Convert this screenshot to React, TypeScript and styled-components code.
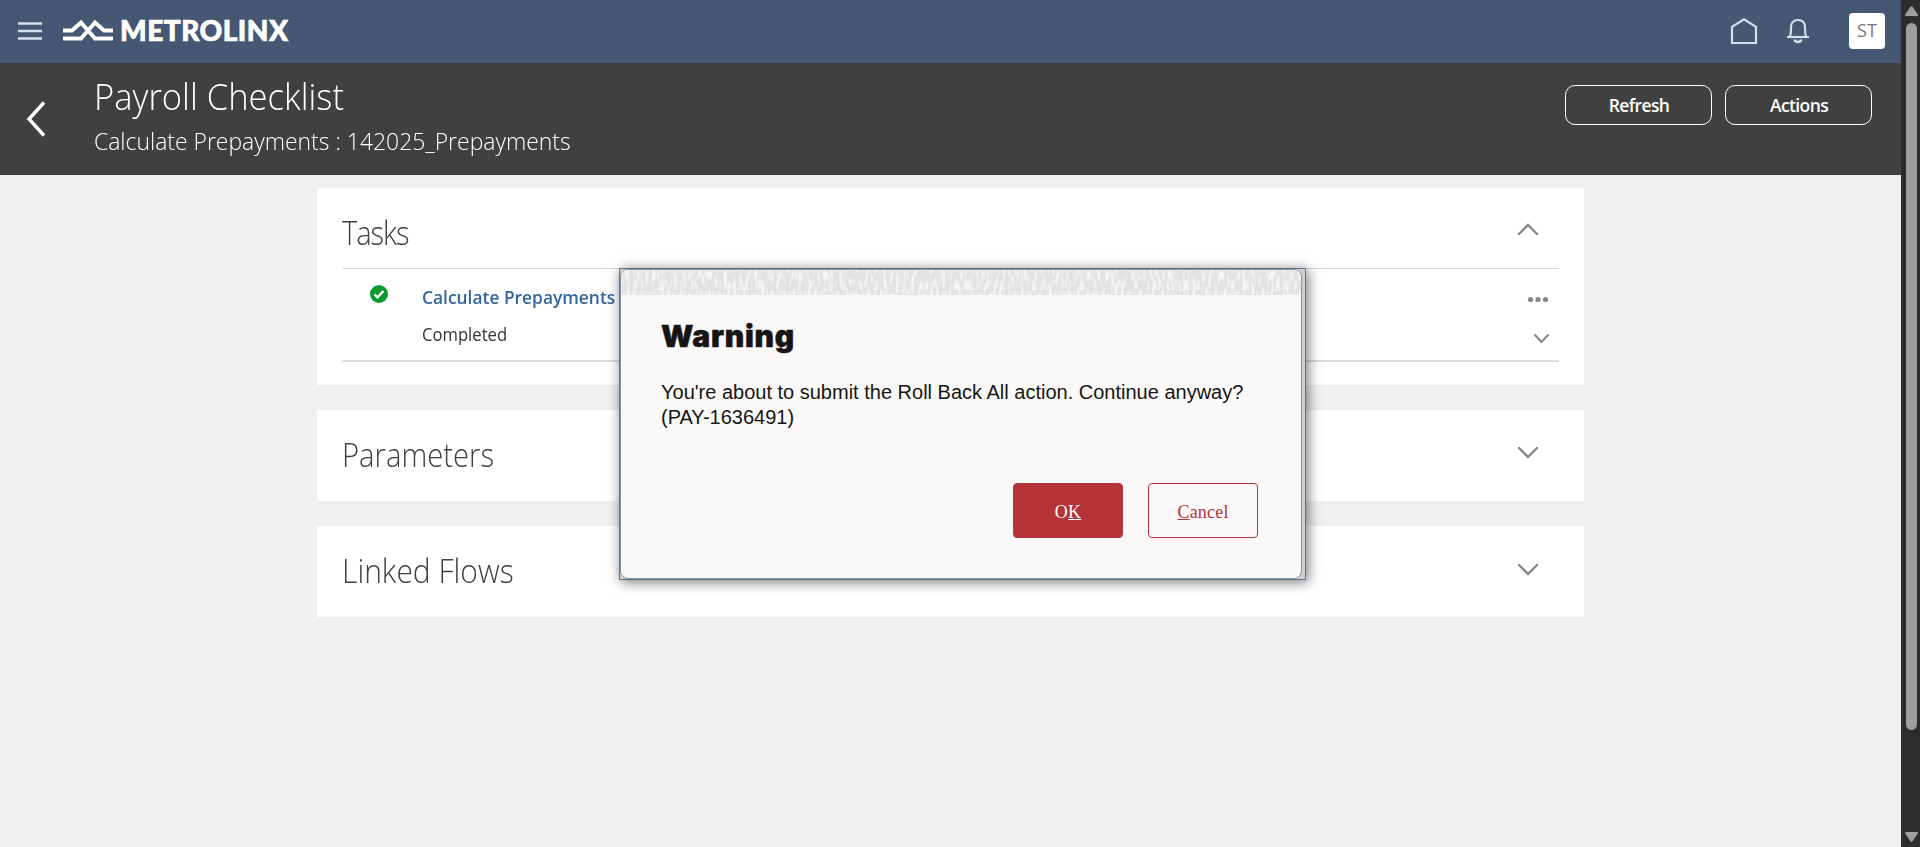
import React from "react";
import styled, { createGlobalStyle } from "styled-components";

const Global = createGlobalStyle`
  * { box-sizing: border-box; }
  html, body { margin: 0; padding: 0; overflow: hidden; }
  body { font-family: "Open Sans", "Noto Sans", sans-serif; background: #f0f0f0; }
  button { font: inherit; padding: 0; margin: 0; border: 0; background: none; }
  svg { display: block; overflow: visible; }
`;

const Screen = styled.div`
  display: flex;
  width: 1920px;
  height: 847px;
  position: relative;
`;
const Page = styled.div`
  width: 1901px;
  display: flex;
  flex-direction: column;
  background: #f0f0f0;
`;
const TopBar = styled.header`
  height: 63px;
  display: flex;
  align-items: center;
  background: #455773;
  padding: 0 16px 1px 18px;
`;
const Brand = styled.div`
  display: flex;
  align-items: center;
  margin-left: 21px;
  gap: 7px;
  color: #fff;
`;
const BrandName = styled.span`
  font: 900 28px/60px Lato, sans-serif;
  letter-spacing: 0.5px;
  -webkit-text-stroke: 0.7px #fff;
  color: #fff;
  height: 62px;
`;
const TopIcons = styled.nav`
  margin-left: auto;
  display: flex;
  align-items: center;
`;
const IconSlot = styled.span<{ $gap: number }>`
  margin-right: ${(p) => p.$gap}px;
`;
const Avatar = styled.div`
  width: 36px;
  height: 36px;
  border-radius: 4px;
  background: #fff;
  color: #777;
  font-size: 18px;
  line-height: 35px;
  text-align: center;
`;
const PageHeader = styled.section`
  height: 112px;
  display: flex;
  background: #404040;
  color: #fff;
  padding: 0 29px 0 27px;
`;
const BackButton = styled.button`
  width: 18px;
  height: 112px;
`;
const Headings = styled.div`
  margin-left: 49px;
  padding-top: 8px;
`;
const PageTitle = styled.h1`
  margin: 0;
  font-size: 37px;
  line-height: 50px;
  font-weight: 300;
  white-space: nowrap;
  transform: scaleX(0.934);
  transform-origin: left;
`;
const PageSubtitle = styled.p`
  margin: 4px 0 0 0;
  font-size: 24px;
  line-height: 32px;
  font-weight: 300;
  white-space: nowrap;
  transform: scaleX(0.955);
  transform-origin: left;
`;
const HeaderActions = styled.div`
  margin: 22px 0 0 auto;
  display: flex;
  gap: 13px;
`;
const HeaderButton = styled.button`
  width: 147px;
  height: 40px;
  padding: 0 0 0 1px;
  border: 1px solid #fff;
  border-radius: 10px;
  color: #fff;
  font-size: 17.5px;
  font-weight: 600;
  letter-spacing: -0.6px;
`;
const Content = styled.main`
  padding: 13px 317px 0;
  display: flex;
  flex-direction: column;
  gap: 25px;
`;
const Card = styled.section<{ $height: number }>`
  height: ${(p) => p.$height}px;
  background: #fff;
  padding: 0 25px;
`;
const CardHead = styled.div<{ $height: number; $iconTop: number }>`
  height: ${(p) => p.$height}px;
  display: flex;
  justify-content: space-between;
  padding-right: 22px;
  & > svg { margin-top: ${(p) => p.$iconTop}px; }
`;
const CardTitle = styled.h2<{ $scale: number; $spacing?: number }>`
  margin: 22px 0 0;
  font-size: 33px;
  line-height: 45px;
  font-weight: 300;
  color: #404040;
  letter-spacing: ${(p) => p.$spacing ?? 0}px;
  white-space: nowrap;
  transform: scaleX(${(p) => p.$scale});
  transform-origin: left;
`;
const TaskRow = styled.div`
  height: 94px;
  display: flex;
  border-top: 1px solid #d2dce5;
  border-bottom: 1px solid #d2dae2;
  box-shadow: inset 0 -1px #e0e0e0;
`;
const TaskStatus = styled.div`
  width: 80px;
  padding: 16px 0 0 28px;
`;
const TaskInfo = styled.div`
  flex: 1;
  padding-top: 15px;
`;
const TaskName = styled.div`
  font-size: 18px;
  line-height: 26px;
  font-weight: 600;
  color: #33669b;
  transform: scaleX(0.965);
  transform-origin: left;
`;
const TaskState = styled.div`
  margin-top: 11px;
  font-size: 18px;
  line-height: 26px;
  color: #333;
  transform: scaleX(0.925);
  transform-origin: left;
`;
const TaskTools = styled.div`
  display: flex;
  flex-direction: column;
  align-items: flex-end;
  padding: 28px 11px 0 0;
  gap: 33px;
`;

const ScrollTrack = styled.aside`
  width: 19px;
  background: #2c2c2c;
  display: flex;
  flex-direction: column;
  align-items: center;
  padding: 6px 0 5px 1px;
`;
const ScrollThumb = styled.div`
  width: 11px;
  height: 707px;
  margin: 7px 0 auto;
  border-radius: 6px;
  background: #9e9e9e;
`;

const DialogFrame = styled.div`
  position: absolute;
  left: 619px;
  top: 268px;
  width: 687px;
  height: 312px;
  border: 1px solid #5c7388;
  background: #cfcfcf;
  padding: 0 3px 0 0;
  box-shadow: 2px 2px 12px rgba(0, 0, 0, 0.55);
`;
const DialogPanel = styled.div`
  height: 310px;
  border: 1px solid #7f97aa;
  border-radius: 8px;
  background: #fbf9f8;
  overflow: hidden;
  display: flex;
  flex-direction: column;
`;
const DialogBody = styled.div`
  padding: 22px 40px 0;
  display: flex;
  flex-direction: column;
  flex: 1;
`;
const DialogTitle = styled.h3`
  margin: 0;
  font: 900 30px/38px Inter, sans-serif;
  letter-spacing: 0.75px;
  -webkit-text-stroke: 0.5px #161513;
  color: #161513;
`;
const DialogText = styled.p`
  margin: 25px 0 0;
  font: 20px/25px "Liberation Sans", Arial, sans-serif;
  color: #161513;
  white-space: nowrap;
`;
const DialogButtons = styled.div`
  display: flex;
  justify-content: flex-end;
  gap: 25px;
  margin: 53px 3px 0 0;
`;
const DialogButton = styled.button<{ $primary?: boolean }>`
  width: 110px;
  height: 55px;
  border: 1px solid #b53439;
  border-radius: 4px;
  background: ${(p) => (p.$primary ? "#b53439" : "transparent")};
  color: ${(p) => (p.$primary ? "#fff" : "#b53439")};
  font: 18px/20px "Liberation Serif", "Times New Roman", serif;
  letter-spacing: 0.2px;
  padding: 3px 0 0;
`;
const TextureStrip = styled.svg`
  flex: none;
`;

const Chevron = ({ up, w = 18, h = 9, stroke = 2.4 }: { up?: boolean; w?: number; h?: number; stroke?: number }) => (
  <svg width={w} height={h} fill="none" stroke="#85888b" strokeWidth={stroke} strokeLinecap="round">
    <path d={up ? `M0 ${h}L${w / 2} 0L${w} ${h}` : `M0 0L${w / 2} ${h}L${w} 0`} />
  </svg>
);

const Texture = () => (
  <TextureStrip width="681" height="25">
    <filter id="grain" x="0" y="0" width="100%" height="100%" colorInterpolationFilters="sRGB">
      <feTurbulence type="fractalNoise" baseFrequency="0.32 0.09" numOctaves="1" seed="4" />
      <feColorMatrix values="0 0 0 0 0.895  0 0 0 0 0.89  0 0 0 0 0.885  4 0 0 0 -1.2" />
    </filter>
    <rect width="681" height="25" fill="#f8f6f5" />
    <rect width="681" height="25" filter="url(#grain)" />
  </TextureStrip>
);

export default function App() {
  return (
    <Screen>
      <Global />
      <Page>
        <TopBar>
          <svg width="24" height="18" stroke="#d5deea" strokeWidth="2.4">
            <path d="M0 1.5H24M0 9H24M0 16.5H24" />
          </svg>
          <Brand>
            <svg width="50" height="22" fill="none" stroke="#fff" strokeWidth="4">
              <path d="M0 10.5H9L18 2.5L32 18.5H50" />
              <path d="M0 18.5H18L32 2.5L41 10.5H50" />
            </svg>
            <BrandName>METROLINX</BrandName>
          </Brand>
          <TopIcons>
            <IconSlot $gap={30}>
              <svg width="26" height="26" fill="none" stroke="#d5deea" strokeWidth="2.2">
                <path d="M1 25V8.8L13 1.2L25 8.8V25Z" />
              </svg>
            </IconSlot>
            <IconSlot $gap={40}>
              <svg width="22" height="24" fill="none" stroke="#d5deea" strokeWidth="2.2">
                <path d="M0 18H22" />
                <path d="M3 17.5C4.2 14 4 11 4 8.5C4 4 6.5 1 11 1S18 4 18 8.5C18 11 17.8 14 19 17.5" />
                <path d="M7.5 20.5C8 23.8 14 23.8 14.5 20.5" strokeWidth="2.4" />
              </svg>
            </IconSlot>
            <Avatar>ST</Avatar>
          </TopIcons>
        </TopBar>
        <PageHeader>
          <BackButton>
            <svg width="18" height="36" fill="none" stroke="#fff" strokeWidth="3.4">
              <path d="M17 1.5L2 18L17 34.5" />
            </svg>
          </BackButton>
          <Headings>
            <PageTitle>Payroll Checklist</PageTitle>
            <PageSubtitle>Calculate Prepayments : 142025_Prepayments</PageSubtitle>
          </Headings>
          <HeaderActions>
            <HeaderButton>Refresh</HeaderButton>
            <HeaderButton>Actions</HeaderButton>
          </HeaderActions>
        </PageHeader>
        <Content>
          <Card $height={197}>
            <CardHead $height={80} $iconTop={37}>
              <CardTitle $scale={0.88} $spacing={-1.2}>Tasks</CardTitle>
              <Chevron up />
            </CardHead>
            <TaskRow>
              <TaskStatus>
                <svg width="18" height="18">
                  <circle cx="9" cy="9" r="9" fill="#0a9a2f" />
                  <path d="M4.5 9.5L7.5 12.3L13.5 6" fill="none" stroke="#fff" strokeWidth="2.4" />
                </svg>
              </TaskStatus>
              <TaskInfo>
                <TaskName>Calculate Prepayments</TaskName>
                <TaskState>Completed</TaskState>
              </TaskInfo>
              <TaskTools>
                <svg width="20" height="5" fill="#85888b">
                  <circle cx="2.5" cy="2.5" r="2.6" />
                  <circle cx="10" cy="2.5" r="2.6" />
                  <circle cx="17.5" cy="2.5" r="2.6" />
                </svg>
                <Chevron w={13} h={7} stroke={2} />
              </TaskTools>
            </TaskRow>
          </Card>
          <Card $height={91}>
            <CardHead $height={91} $iconTop={38}>
              <CardTitle $scale={0.885}>Parameters</CardTitle>
              <Chevron />
            </CardHead>
          </Card>
          <Card $height={91}>
            <CardHead $height={91} $iconTop={39}>
              <CardTitle $scale={0.909}>Linked Flows</CardTitle>
              <Chevron />
            </CardHead>
          </Card>
        </Content>
      </Page>
      <ScrollTrack>
        <svg width="13" height="10" fill="#9e9e9e" stroke="#9e9e9e" strokeWidth="2" strokeLinejoin="round">
          <path d="M6.5 1L12 9H1Z" />
        </svg>
        <ScrollThumb />
        <svg width="13" height="10" fill="#9e9e9e" stroke="#9e9e9e" strokeWidth="2" strokeLinejoin="round">
          <path d="M1 1H12L6.5 9Z" />
        </svg>
      </ScrollTrack>
      <DialogFrame role="dialog">
        <DialogPanel>
          <Texture />
          <DialogBody>
            <DialogTitle>Warning</DialogTitle>
            <DialogText>
              You're about to submit the Roll Back All action. Continue anyway?
              <br />
              (PAY-1636491)
            </DialogText>
            <DialogButtons>
              <DialogButton $primary>
                O<u>K</u>
              </DialogButton>
              <DialogButton>
                <u>C</u>ancel
              </DialogButton>
            </DialogButtons>
          </DialogBody>
        </DialogPanel>
      </DialogFrame>
    </Screen>
  );
}
